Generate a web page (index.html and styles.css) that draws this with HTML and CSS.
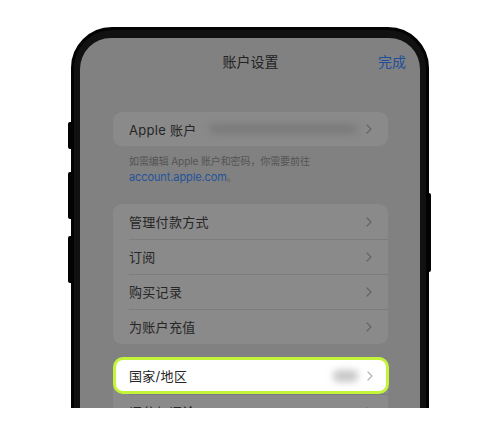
FILE: index.html
```html
<!DOCTYPE html>
<html lang="zh-CN">

<head>
  <meta charset="UTF-8">
  <meta name="viewport" content="width=device-width, initial-scale=1.0">
  <title>账户设置</title>
  <link rel="stylesheet" href="styles.css">
</head>

<body>
  <div class="stage">
    <div class="phone">
      <span class="key key-l1"></span>
      <span class="key key-l2"></span>
      <span class="key key-l3"></span>
      <span class="key key-r1"></span>

      <div class="screen">
        <div class="nav">
          <h2>账户设置</h2>
          <a class="done">完成</a>
        </div>

        <div class="group">
          <div class="row">
            <span class="label">Apple 账户</span>
            <span class="blur blur-mail"></span>
            <svg class="chev" width="6" height="10" viewBox="0 0 6 10"><path d="M1 1l4 4-4 4" fill="none" stroke="currentColor" stroke-width="1.2" stroke-linecap="round" stroke-linejoin="round"/></svg>
          </div>
        </div>
        <p class="note">如需编辑 Apple 账户和密码，你需要前往<br><a>account.apple.com</a>。</p>

        <div class="group group-list">
          <div class="row">
            <span class="label">管理付款方式</span>
            <svg class="chev" width="6" height="10" viewBox="0 0 6 10"><path d="M1 1l4 4-4 4" fill="none" stroke="currentColor" stroke-width="1.2" stroke-linecap="round" stroke-linejoin="round"/></svg>
          </div>
          <div class="row">
            <span class="label">订阅</span>
            <svg class="chev" width="6" height="10" viewBox="0 0 6 10"><path d="M1 1l4 4-4 4" fill="none" stroke="currentColor" stroke-width="1.2" stroke-linecap="round" stroke-linejoin="round"/></svg>
          </div>
          <div class="row">
            <span class="label">购买记录</span>
            <svg class="chev" width="6" height="10" viewBox="0 0 6 10"><path d="M1 1l4 4-4 4" fill="none" stroke="currentColor" stroke-width="1.2" stroke-linecap="round" stroke-linejoin="round"/></svg>
          </div>
          <div class="row">
            <span class="label">为账户充值</span>
            <svg class="chev" width="6" height="10" viewBox="0 0 6 10"><path d="M1 1l4 4-4 4" fill="none" stroke="currentColor" stroke-width="1.2" stroke-linecap="round" stroke-linejoin="round"/></svg>
          </div>
        </div>

        <div class="group group-list group-last">
          <div class="row row-focus">
            <span class="label">国家/地区</span>
            <span class="blur blur-value"></span>
            <svg class="chev" width="6" height="10" viewBox="0 0 6 10"><path d="M1 1l4 4-4 4" fill="none" stroke="currentColor" stroke-width="1.2" stroke-linecap="round" stroke-linejoin="round"/></svg>
          </div>
          <div class="row">
            <span class="label">评分与评论</span>
            <svg class="chev" width="6" height="10" viewBox="0 0 6 10"><path d="M1 1l4 4-4 4" fill="none" stroke="currentColor" stroke-width="1.2" stroke-linecap="round" stroke-linejoin="round"/></svg>
          </div>
        </div>
      </div>
    </div>
  </div>
</body>

</html>
```

FILE: styles.css
```css
* {
  box-sizing: border-box;
}

body {
  margin: 0;
  background: #fff;
  font-family: "Inter", "Noto Sans CJK SC", sans-serif;
}

.stage {
  width: 500px;
  height: 408px;
  overflow: hidden;
}

.phone {
  position: relative;
  width: 358px;
  margin: 27px 0 0 71px;
  padding: 8px 6px 0;
  background: #111;
  border: 3px solid #030303;
  border-radius: 41px;
}

/* side keys */
.key {
  position: absolute;
  width: 4px;
  background: #030303;
  border-radius: 2px 0 0 2px;
}

.key-l1 {
  left: -6px;
  top: 92px;
  height: 27px;
}

.key-l2 {
  left: -6px;
  top: 142px;
  height: 47px;
}

.key-l3 {
  left: -6px;
  top: 206px;
  height: 47px;
}

.key-r1 {
  right: -5px;
  width: 3px;
  top: 163px;
  height: 79px;
  border-radius: 0 2px 2px 0;
}

.screen {
  height: 420px;
  background: #818181;
  border-radius: 31px 31px 0 0;
  padding: 0 32px 0 33px;
  overflow: hidden;
}

.nav {
  position: relative;
  height: 46px;
  display: flex;
  align-items: center;
  justify-content: center;
}

.nav h2 {
  margin: 0;
  font-size: 14px;
  font-weight: 400;
  color: #232323;
}

.done {
  position: absolute;
  right: -18px;
  top: 13px;
  font-size: 14px;
  color: #1f4f9c;
}

.group {
  background: #8a8a8a;
  border-radius: 9px;
  margin-top: 28px;
}

.group-list {
  margin-top: 19px;
}

.group-last {
  margin-top: 13px;
}

.row {
  display: flex;
  align-items: center;
  height: 34px;
  padding: 0 16px;
  font-size: 13px;
  color: #262626;
}

.group-list .row {
  height: 35px;
  position: relative;
}

.group-list .row + .row::before {
  content: '';
  position: absolute;
  left: 16px;
  right: 0;
  top: 0;
  border-top: 1px solid #7d7d7d;
}

.label {
  flex: 1;
  letter-spacing: 0.3px;
}

.chev {
  color: #646464;
  margin-left: 9px;
}

.blur {
  display: block;
  height: 10px;
  border-radius: 5px;
  filter: blur(3.5px);
}

.blur-mail {
  width: 148px;
  background: #7b7b7b;
}

.blur-value {
  width: 25px;
  height: 12px;
  background: #c8c8c8;
}

.group-list .row-focus {
  height: 37px;
  background: #fff;
  border: 3px solid #c2f53a;
  border-radius: 10px;
  padding-left: 13px;
  padding-right: 13px;
  margin: 0 -1px 0 0;
}

.row-focus .chev {
  color: #b3b3b3;
}

.note {
  margin: 0;
  padding: 7px 16px 0;
  font-size: 10px;
  line-height: 16px;
  letter-spacing: -0.1px;
  color: #545454;
}

.note a {
  color: #24539c;
  font-size: 11px;
}
```
